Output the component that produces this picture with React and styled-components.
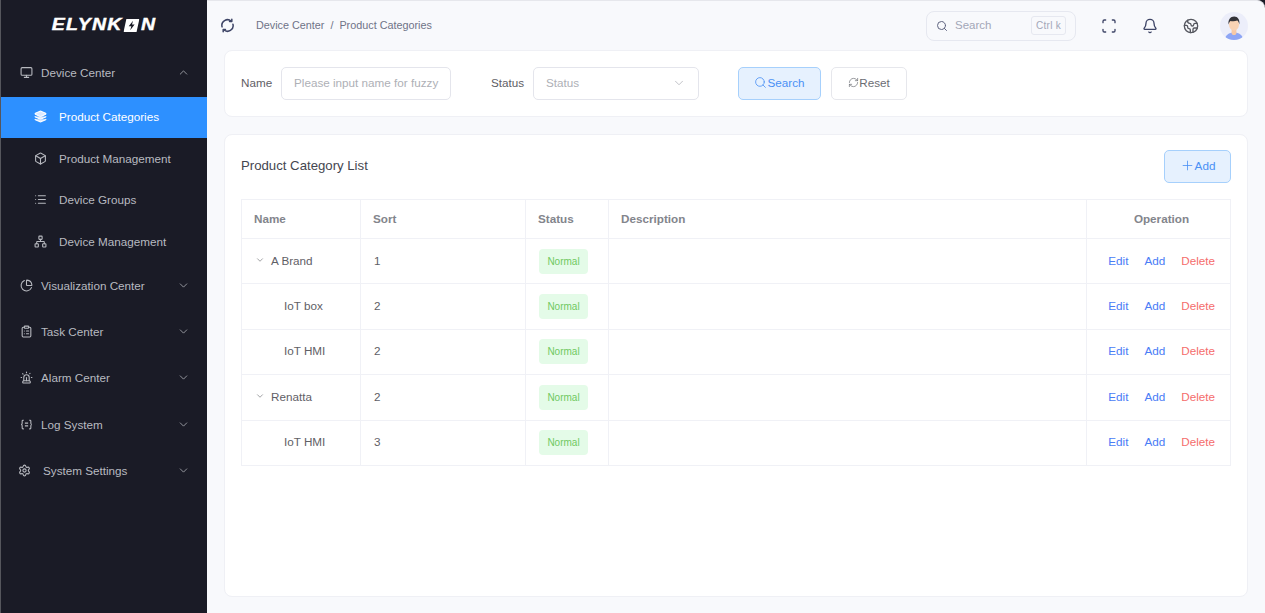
import React from "react";
import styled, { createGlobalStyle } from "styled-components";
import {
  Bell,
  Box,
  ChartPie,
  ChevronDown,
  ChevronUp,
  ClipboardList,
  Earth,
  Layers,
  List,
  Monitor,
  Network,
  Plus,
  RefreshCw,
  Scan,
  Search,
  Settings,
  Siren,
} from "lucide-react";

const GlobalStyle = createGlobalStyle`
  html, body {
    margin: 0;
    padding: 0;
    height: 100%;
    overflow: hidden;
  }
  body {
    font-family: "Liberation Sans", Arial, sans-serif;
    font-size: 11.7px;
    background: #1a1b26;
  }
  * {
    box-sizing: border-box;
  }
`;

const Layout = styled.div`
  display: flex;
  width: 1265px;
  height: 613px;
  background: #1a1b26;
`;

const Sidebar = styled.aside`
  width: 207px;
  flex-shrink: 0;
  height: 100%;
  background: #1a1b26;
  border-left: 1px solid #55565c;
  color: #b8bac0;
`;

const Logo = styled.div`
  height: 50.5px;
  display: flex;
  align-items: center;
  justify-content: center;
  gap: 1px;
  color: #fff;
  font-size: 16px;
  font-weight: 700;
  font-style: italic;
  letter-spacing: 1px;
  -webkit-text-stroke: 0.4px #fff;
  transform: scaleX(1.22);
`;

const MenuItem = styled.div`
  height: 46.4px;
  display: flex;
  align-items: center;
  padding-left: ${(p) => (p.$wide ? "17px" : "19px")};
  padding-right: 17px;
  padding-bottom: 2px;
  gap: ${(p) => (p.$wide ? "12px" : "8px")};
`;

const MenuLabel = styled.span`
  flex: 1;
`;

const SubItem = styled.div`
  height: 41.5px;
  display: flex;
  align-items: center;
  padding-left: 33px;
  padding-bottom: 2px;
  gap: 12px;
  background: ${(p) => (p.$active ? "#2d90ff" : "transparent")};
  color: ${(p) => (p.$active ? "#fff" : "#b8bac0")};
`;

const Main = styled.main`
  flex: 1;
  min-width: 0;
  display: flex;
  flex-direction: column;
  padding: 0 17px 16px 17px;
  background: #f8f9fc;
  border-top: 1px solid #e6e7ec;
  border-top-right-radius: 8px;
`;

const Header = styled.header`
  height: 49px;
  flex-shrink: 0;
  display: flex;
  align-items: center;
  margin-left: -4px;
  color: #3d4466;
`;

const Breadcrumb = styled.div`
  margin-left: 21px;
  padding-bottom: 2px;
  flex: 1;
  font-size: 10.8px;
  color: #6f7387;
`;

const Separator = styled.span`
  margin: 0 6px;
`;

const TopSearch = styled.div`
  width: 150px;
  height: 30px;
  display: flex;
  align-items: center;
  gap: 7px;
  padding: 0 9px;
  border: 1px solid #e6e8f0;
  border-radius: 8px;
  font-size: 11.5px;
  color: #a3a7b8;
`;

const TopSearchText = styled.span`
  flex: 1;
  padding-bottom: 1px;
`;

const Kbd = styled.span`
  width: 35px;
  height: 19px;
  padding-bottom: 1px;
  display: flex;
  align-items: center;
  justify-content: center;
  border: 1px solid #e6e8f0;
  border-radius: 3px;
  font-size: 10px;
  letter-spacing: 0.3px;
`;

const HeaderIcons = styled.div`
  display: flex;
  align-items: center;
  gap: 25px;
  margin-left: 25px;
`;

const AvatarWrap = styled.div`
  width: 28px;
  height: 28px;
  margin-left: -4px;
  border-radius: 50%;
  overflow: hidden;
  background: #eceefa;
`;

const Card = styled.section`
  background: #fff;
  border: 1px solid #eff0f5;
  border-radius: 8px;
`;

const FilterCard = styled(Card)`
  height: 67px;
  flex-shrink: 0;
  display: flex;
  align-items: center;
  padding-left: 16px;
  color: #5f6066;
`;

const FieldLabel = styled.span`
  width: ${(p) => p.$width}px;
  flex-shrink: 0;
  padding-bottom: 2px;
`;

const Input = styled.div`
  height: 33px;
  display: flex;
  align-items: center;
  width: ${(p) => p.$width}px;
  padding: 0 12px 2px;
  border: 1px solid #e4e5ec;
  border-radius: 5px;
  color: #aeb0b6;
  justify-content: space-between;
  white-space: nowrap;
`;

const StatusField = styled.div`
  display: flex;
  align-items: center;
  margin-left: 40px;
`;

const Button = styled.div`
  height: 33px;
  padding-bottom: 3px;
  display: flex;
  align-items: center;
  justify-content: center;
  border-radius: 5px;
  width: ${(p) => p.$width}px;
  border: 1px solid ${(p) => (p.$primary ? "#a6d0fc" : "#e6e7ec")};
  background: ${(p) => (p.$primary ? "#e6f1fe" : "#fff")};
  color: ${(p) => (p.$primary ? "#4a90f5" : "#6b6d73")};
`;

const Actions = styled.div`
  display: flex;
  gap: 10px;
  margin-left: 39px;
`;

const ListCard = styled(Card)`
  flex: 1;
  margin-top: 17px;
  padding: 15px 16px;
`;

const ListHead = styled.div`
  display: flex;
  align-items: center;
  justify-content: space-between;
  margin-bottom: 16px;
`;

const ListTitle = styled.h2`
  margin: 0 0 3px;
  font-size: 13.2px;
  font-weight: 400;
  color: #44464f;
`;

const Table = styled.table`
  width: 989px;
  table-layout: fixed;
  border-collapse: collapse;
`;

const Th = styled.th`
  height: 39px;
  padding: 0 ${(p) => (p.$align ? "12px" : "12px")} 2px ${(p) => (p.$align ? "18px" : "12px")};
  border: 1px solid #f0f1f6;
  text-align: ${(p) => p.$align || "left"};
  color: #83858c;
  font-weight: 700;
  font-size: 11.7px;
`;

const Td = styled.td`
  height: 45.4px;
  padding: 0 ${(p) => (p.$ops ? "15px" : "12px")} ${(p) => (p.$tag ? "0" : "2px")} 13px;
  border: 1px solid #f0f1f6;
  color: #5f6066;
`;

const NameCell = styled.div`
  display: flex;
  align-items: center;
  gap: 6px;
  padding-left: ${(p) => (p.$child ? "29px" : "0")};
`;

const Tag = styled.span`
  display: inline-flex;
  align-items: center;
  justify-content: center;
  width: 49px;
  height: 25px;
  border-radius: 4px;
  background: #e4fbe8;
  color: #70c961;
  font-size: 10px;
`;

const Ops = styled.div`
  display: flex;
  justify-content: flex-end;
  gap: 16px;
`;

const OpLink = styled.a`
  color: ${(p) => (p.$danger ? "#f56c6c" : "#4a7cf6")};
  cursor: pointer;
`;

const subItems = [
  { label: "Product Categories", icon: Layers, active: true },
  { label: "Product Management", icon: Box },
  { label: "Device Groups", icon: List },
  { label: "Device Management", icon: Network },
];

const rows = [
  { name: "A Brand", sort: 1, parent: true },
  { name: "IoT box", sort: 2 },
  { name: "IoT HMI", sort: 2 },
  { name: "Renatta", sort: 2, parent: true },
  { name: "IoT HMI", sort: 3 },
];

const LogIcon = (props) => (
  <svg width="13" height="13" viewBox="0 0 24 24" fill="none" stroke="currentColor" strokeWidth="2" {...props}>
    <path d="M7 4H5.5C4.5 4 4 4.6 4 5.5v4.2C4 11 3 12 2 12c1 0 2 1 2 2.3v4.2c0 .9.5 1.5 1.5 1.5H7" />
    <path d="M17 4h1.5c1 0 1.5.6 1.5 1.5v4.2c0 1.3 1 2.3 2 2.3-1 0-2 1-2 2.3v4.2c0 .9-.5 1.5-1.5 1.5H17" />
    <path d="M9 9.5h6M9 14.5h6" />
  </svg>
);

const LogoBolt = () => (
  <svg width="13" height="13" viewBox="0 0 14 14">
    <path fill="#fff" d="M2.5 0H14l-2.5 14H0z" />
    <path fill="#1a1b26" d="M8.4 1.8 4.6 7.8h2.3l-1 4.4 3.9-6.2H7.5z" />
  </svg>
);

const SyncIcon = () => (
  <svg width="15" height="15" viewBox="0 0 16 16" fill="none" stroke="currentColor" strokeWidth="1.6" strokeLinecap="round">
    <path d="M2.2 9.4A6 6 0 0 1 12 3.4" />
    <path d="M13.8 6.6A6 6 0 0 1 4 12.6" />
    <path d="M12.6 1.4v2.4h-2.4" strokeLinejoin="round" />
    <path d="M3.4 14.6v-2.4h2.4" strokeLinejoin="round" />
  </svg>
);

const Avatar = () => (
  <svg width="28" height="28" viewBox="0 0 28 28">
    <path fill="#8ea6f5" d="M5 28c0-5 4-7.6 9-7.6s9 2.6 9 7.6z" />
    <path fill="#f7c9a6" d="M11.6 16h4.8v5.2c0 1-1 1.8-2.4 1.8s-2.4-.8-2.4-1.8z" />
    <ellipse fill="#f9d3b4" cx="14" cy="12.4" rx="5" ry="6" />
    <path fill="#34343a" d="M8.6 12.5C7.8 7.6 10.4 4.4 14.2 4.4c3.6 0 5.8 3 5.2 8-.5-2-1.2-3.2-2.2-3.8-2 .9-5.2.9-6.8.3-.9.8-1.4 2-1.8 3.6z" />
  </svg>
);

const App = () => (
  <Layout>
    <GlobalStyle />
    <Sidebar>
      <Logo>
        <span>ELYNK</span>
        <LogoBolt />
        <span>N</span>
      </Logo>
      <MenuItem>
        <Monitor size={13} />
        <MenuLabel>Device Center</MenuLabel>
        <ChevronUp size={13} strokeWidth={1.4} />
      </MenuItem>
      {subItems.map(({ label, icon: Icon, active }) => (
        <SubItem key={label} $active={active}>
          <Icon size={13} strokeWidth={2} fill={active ? "#dbe9ff" : "none"} />
          {label}
        </SubItem>
      ))}
      <MenuItem>
        <ChartPie size={13} />
        <MenuLabel>Visualization Center</MenuLabel>
        <ChevronDown size={13} strokeWidth={1.4} />
      </MenuItem>
      <MenuItem>
        <ClipboardList size={13} />
        <MenuLabel>Task Center</MenuLabel>
        <ChevronDown size={13} strokeWidth={1.4} />
      </MenuItem>
      <MenuItem>
        <Siren size={13} />
        <MenuLabel>Alarm Center</MenuLabel>
        <ChevronDown size={13} strokeWidth={1.4} />
      </MenuItem>
      <MenuItem>
        <LogIcon />
        <MenuLabel>Log System</MenuLabel>
        <ChevronDown size={13} strokeWidth={1.4} />
      </MenuItem>
      <MenuItem $wide>
        <Settings size={13} />
        <MenuLabel>System Settings</MenuLabel>
        <ChevronDown size={13} strokeWidth={1.4} />
      </MenuItem>
    </Sidebar>
    <Main>
      <Header>
        <SyncIcon />
        <Breadcrumb>
          Device Center<Separator>/</Separator>Product Categories
        </Breadcrumb>
        <TopSearch>
          <Search size={12} color="#5f6480" />
          <TopSearchText>Search</TopSearchText>
          <Kbd>Ctrl k</Kbd>
        </TopSearch>
        <HeaderIcons>
          <Scan size={16} />
          <Bell size={16} />
          <Earth size={16} color="#55575f" />
          <AvatarWrap>
            <Avatar />
          </AvatarWrap>
        </HeaderIcons>
      </Header>
      <FilterCard>
        <FieldLabel $width={40}>Name</FieldLabel>
        <Input $width={170}>Please input name for fuzzy</Input>
        <StatusField>
          <FieldLabel $width={42}>Status</FieldLabel>
          <Input $width={166}>
            Status
            <ChevronDown size={14} strokeWidth={1.3} />
          </Input>
        </StatusField>
        <Actions>
          <Button $primary $width={83}>
            <Search size={13} strokeWidth={1.5} />
            Search
          </Button>
          <Button $width={76}>
            <RefreshCw size={11} strokeWidth={1.5} />
            Reset
          </Button>
        </Actions>
      </FilterCard>
      <ListCard>
        <ListHead>
          <ListTitle>Product Category List</ListTitle>
          <Button $primary $width={67}>
            <Plus size={15} strokeWidth={1.3} />
            Add
          </Button>
        </ListHead>
        <Table>
          <colgroup>
            <col width="119" />
            <col width="165" />
            <col width="83" />
            <col width="478" />
            <col width="144" />
          </colgroup>
          <thead>
            <tr>
              <Th>Name</Th>
              <Th>Sort</Th>
              <Th>Status</Th>
              <Th>Description</Th>
              <Th $align="center">Operation</Th>
            </tr>
          </thead>
          <tbody>
            {rows.map((row, i) => (
              <tr key={i}>
                <Td>
                  <NameCell $child={!row.parent}>
                    {row.parent && <ChevronDown size={10} strokeWidth={1.4} />}
                    {row.name}
                  </NameCell>
                </Td>
                <Td>{row.sort}</Td>
                <Td $tag>
                  <Tag>Normal</Tag>
                </Td>
                <Td />
                <Td $ops>
                  <Ops>
                    <OpLink>Edit</OpLink>
                    <OpLink>Add</OpLink>
                    <OpLink $danger>Delete</OpLink>
                  </Ops>
                </Td>
              </tr>
            ))}
          </tbody>
        </Table>
      </ListCard>
    </Main>
  </Layout>
);

export default App;
